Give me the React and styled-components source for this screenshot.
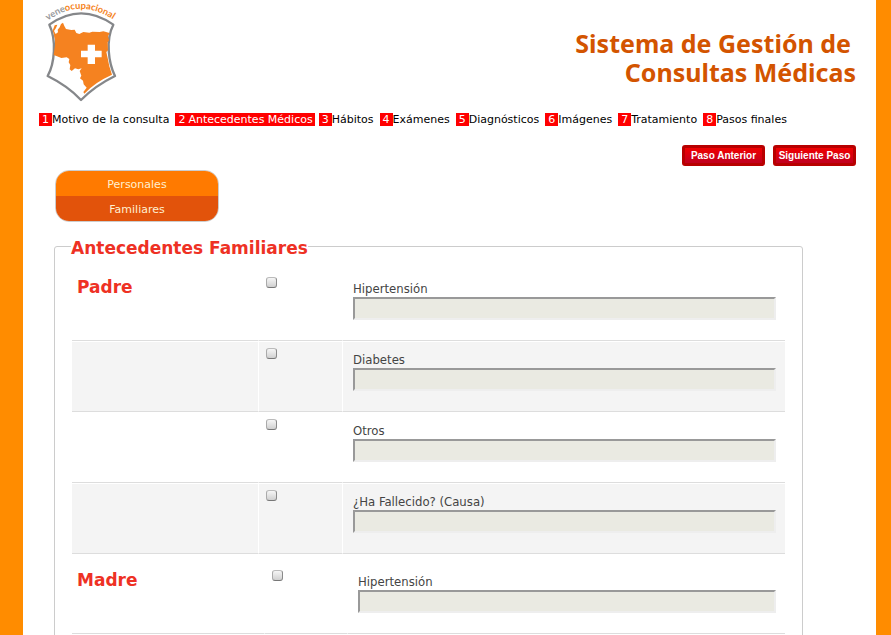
import React from "react";
import styled, { createGlobalStyle } from "styled-components";

const GlobalStyle = createGlobalStyle`
  *, *::before, *::after { box-sizing: border-box; }
  body {
    margin: 0;
    background: #ff8c00;
    font-family: "DejaVu Sans", Verdana, sans-serif;
    font-size: 11px;
    color: #000;
  }
`;

const Backdrop = styled.div`
  display: flex;
  min-height: 100vh;
  padding: 0 15px 0 23px;
`;

const Page = styled.div`
  flex: 1;
  min-width: 0;
  background: #fff;
`;

const Header = styled.header`
  display: flex;
  justify-content: space-between;
  align-items: flex-start;
  padding: 0 20px 0 20px;
`;

const LogoArt = styled.svg`
  width: 80px;
  height: 104px;
  overflow: visible;
`;

const LogoText = styled.text`
  font-family: Lato, sans-serif;
  font-size: 28px;
  font-weight: 700;
  fill: #97999c;
`;

const Title = styled.h1`
  margin: 29px 0 0;
  font-family: "Noto Sans", sans-serif;
  font-size: 25px;
  line-height: 29px;
  font-weight: 700;
  text-align: right;
  color: #d35400;
`;

const TitleLine = styled.span`
  display: block;
  padding-right: ${(p) => (p.$inset ? "5px" : "0")};
`;

const Steps = styled.nav`
  display: flex;
  flex-wrap: wrap;
  gap: 4px;
  padding: 9px 16px 0;
  line-height: 13px;
`;

const StepLink = styled.a`
  display: flex;
  padding-right: 2px;
  text-decoration: none;
  color: ${(p) => (p.$active ? "#fff" : "#000")};
  background: ${(p) => (p.$active ? "#f00" : "transparent")};
`;

const StepNumber = styled.span`
  padding: 0 3px;
  color: #fff;
  background: #f00;
`;

const Actions = styled.div`
  display: flex;
  justify-content: flex-end;
  gap: 8px;
  padding: 19px 20px 0;
`;

const ActionButton = styled.button`
  width: 83px;
  height: 21px;
  padding: 0;
  border: 3px solid #b80000;
  border-radius: 3px;
  background: linear-gradient(#f00000, #c00020);
  color: #fff;
  font: bold 10px/13px "Liberation Sans", Arial, sans-serif;
  white-space: nowrap;
  display: flex;
  align-items: center;
  justify-content: center;
`;

const Tabs = styled.nav`
  display: flex;
  flex-direction: column;
  width: 164px;
  margin: 4px 0 0 32px;
  border: 1px solid #ccc;
  border-radius: 14px;
  overflow: hidden;
`;

const Tab = styled.a`
  padding: 2px 0 0;
  line-height: 23px;
  text-align: center;
  text-decoration: none;
  color: #ffefd0;
  background: ${(p) => (p.$active ? "#e2530b" : "#ff7a00")};
`;

const Group = styled.fieldset`
  min-width: 0;
  margin: 12px 73px 20px 31px;
  padding: 12px 17px 20px;
  border: 1px solid #ccc;
  border-radius: 3px;
`;

const Legend = styled.legend`
  padding: 4px 0 0;
  margin-left: -1px;
  font-size: 17px;
  line-height: 20px;
  font-weight: 700;
  color: #ee3124;
`;

const History = styled.table`
  width: 100%;
  margin-bottom: 9px;
  table-layout: fixed;
  border-collapse: separate;
  border-spacing: 0;
`;

const NameCol = styled.col`
  width: ${(p) => (p.$wide ? "192px" : "186px")};
`;

const CheckCol = styled.col`
  width: ${(p) => (p.$wide ? "83px" : "84px")};
`;

const Row = styled.tr`
  background: #fff;
  &:nth-child(even) { background: #f4f4f4; }
`;

const Cell = styled.td`
  height: 71px;
  vertical-align: top;
  border-top: 1px solid #fff;
  border-bottom: 1px solid #ddd;
  border-left: ${(p) => (p.$first ? "0" : "1px solid #fff")};
  padding: ${(p) => p.$pad};
`;

const Relative = styled.h2`
  margin: 0;
  font-size: 17px;
  line-height: 20px;
  color: #ee3124;
`;

const Check = styled.input`
  appearance: none;
  display: block;
  width: 11px;
  height: 11px;
  margin: 0;
  border: 1px solid;
  border-color: #bbb #8a8a8a #777 #aaa;
  border-radius: 3px;
  background: linear-gradient(#f6f6f6, #d0d0d0);
`;

const Label = styled.label`
  display: block;
  font-family: "DejaVu Sans Condensed", "DejaVu Sans", sans-serif;
  font-size: 13px;
  line-height: 16px;
  color: #444;
`;

const Field = styled.input`
  display: block;
  width: 100%;
  height: 23px;
  padding: 1px 4px;
  border: 2px solid;
  border-color: #999 #eee #eee #999;
  background: #eaeae2;
  font: inherit;
`;

const steps = [
  "Motivo de la consulta",
  "Antecedentes Médicos",
  "Hábitos",
  "Exámenes",
  "Diagnósticos",
  "Imágenes",
  "Tratamiento",
  "Pasos finales",
];

const relatives = [
  { name: "Padre", wide: false, conditions: ["Hipertensión", "Diabetes", "Otros", "¿Ha Fallecido? (Causa)"] },
  { name: "Madre", wide: true, conditions: ["Hipertensión"] },
];

function Logo() {
  return (
    <LogoArt viewBox="69 0 240 312" role="img" aria-label="veneocupacional">
      <path id="arch" d="M84 62 Q184 -12 294 68" fill="none" />
      <LogoText>
        <textPath href="#arch">
          vene<tspan fill="#f58220">ocupacional</tspan>
        </textPath>
      </LogoText>
      <path
        d="M88 74 Q183 6 280 74 C256 120 266 190 285 228 Q224 258 183 300 Q144 258 83 228 C104 190 110 120 88 74Z"
        fill="#fff"
        stroke="#85878a"
        strokeWidth="7"
        strokeLinejoin="round"
      />
      <path
        d="M104 76 L112 74 108 84 102 93 107 102 114 97 113 89 119 82 123 72 129 68 133 78 138 87 154 90 164 89 169 99 178 102 190 96 208 98 217 95 239 96 250 94 269 99 264 109 267 121 263 127 264 151 259 156 263 174 268 199 276 224 Q224 247 193 281 L190 276 200 263 191 253 189 242 180 235 184 227 179 213 185 205 175 208 165 205 155 213 149 208 151 195 146 187 148 177 140 172 124 174 111 169 101 165 105 136 105 120 101 101 98 92Z"
        fill="#f58220"
      />
      <path d="M103 109 L110 104 115 113 116 118 108 120Z" fill="#f58220" />
      <path d="M203 134h22v18h20v20h-20v20h-22v-20h-20v-20h20Z" fill="#fff" />
    </LogoArt>
  );
}

export default function App() {
  return (
    <>
      <GlobalStyle />
      <Backdrop>
        <Page>
          <Header>
            <Logo />
            <Title>
              <TitleLine $inset>Sistema de Gestión de</TitleLine>
              <TitleLine>Consultas Médicas</TitleLine>
            </Title>
          </Header>
          <Steps>
            {steps.map((step, i) => (
              <StepLink key={step} href={`#paso-${i + 1}`} $active={i === 1}>
                <StepNumber>{i + 1}</StepNumber>
                <span>{step}</span>
              </StepLink>
            ))}
          </Steps>
          <Actions>
            <ActionButton type="button">Paso Anterior</ActionButton>
            <ActionButton type="button">Siguiente Paso</ActionButton>
          </Actions>
          <Tabs>
            <Tab href="#personales">Personales</Tab>
            <Tab href="#familiares" $active>Familiares</Tab>
          </Tabs>
          <Group>
            <Legend>Antecedentes Familiares</Legend>
            {relatives.map(({ name, wide, conditions }) => (
              <History key={name}>
                <colgroup>
                  <NameCol $wide={wide} />
                  <CheckCol $wide={wide} />
                  <col />
                </colgroup>
                <tbody>
                  {conditions.map((condition, i) => {
                    const id = `${name}-${i}`;
                    return (
                      <Row key={id}>
                        <Cell $first $pad="6px 5px">{i === 0 && <Relative>{name}</Relative>}</Cell>
                        <Cell $pad="6px 7px">
                          <Check type="checkbox" id={`${id}-check`} aria-label={`${name}: ${condition}`} />
                        </Cell>
                        <Cell $pad="10px 9px 0 10px">
                          <Label htmlFor={id}>{condition}</Label>
                          <Field type="text" id={id} />
                        </Cell>
                      </Row>
                    );
                  })}
                </tbody>
              </History>
            ))}
          </Group>
        </Page>
      </Backdrop>
    </>
  );
}
